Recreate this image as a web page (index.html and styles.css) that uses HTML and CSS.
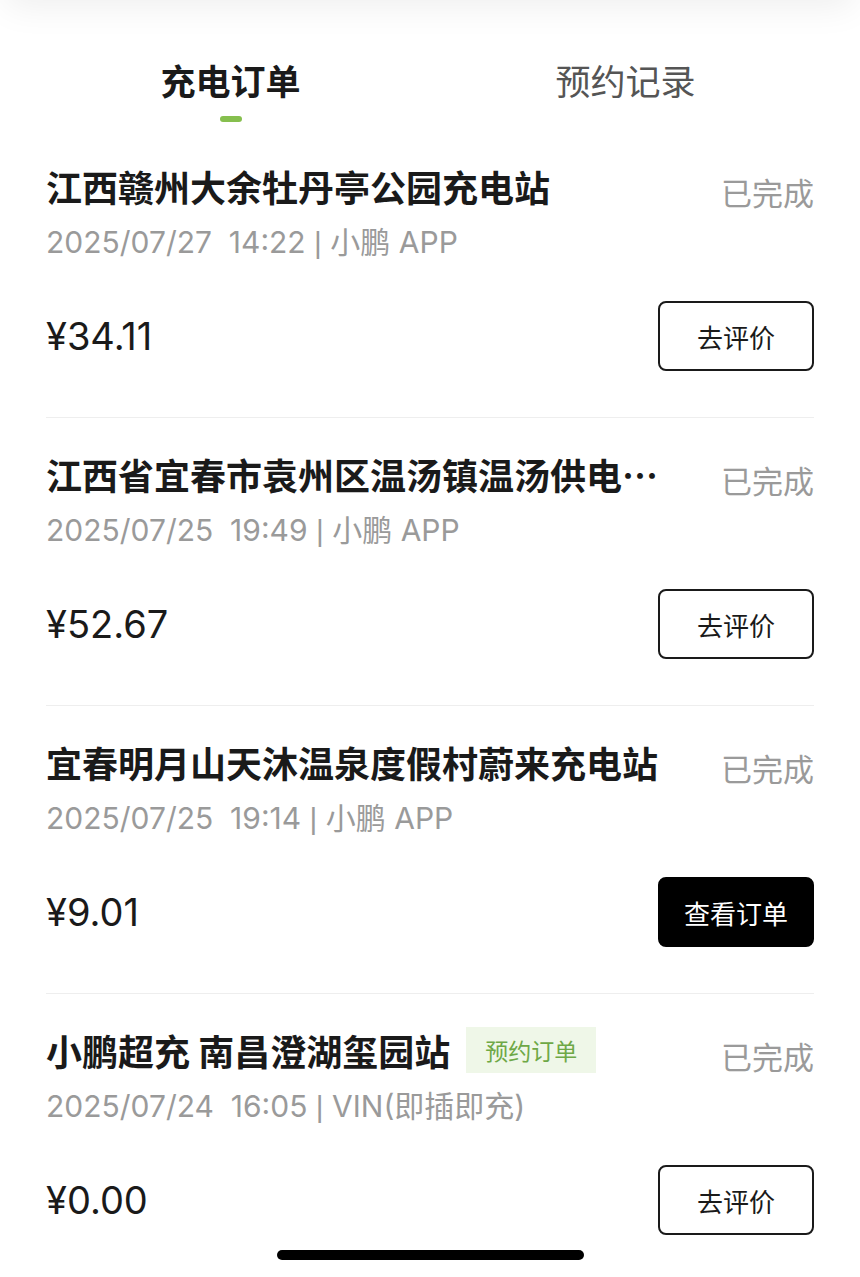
FILE: index.html
```html
<!DOCTYPE html>
<html lang="zh-CN">
<head>
<meta charset="utf-8">
<title>充电订单</title>
<link rel="stylesheet" href="styles.css">
</head>
<body>
<div class="page">
  <div class="header-shadow"></div>
  <nav class="tabs">
    <div class="tab tab-active">
      <span class="tab-label">充电订单</span>
      <span class="tab-bar"></span>
    </div>
    <div class="tab">
      <span class="tab-label">预约记录</span>
    </div>
  </nav>

  <ul class="orders">
    <li class="order">
      <div class="order-top">
        <div class="order-title-wrap">
          <h2 class="order-title">江西赣州大余牡丹亭公园充电站</h2>
        </div>
        <span class="order-status">已完成</span>
      </div>
      <p class="order-meta">2025/07/27&nbsp;&nbsp;14:22 <span class="sep">|</span> 小鹏 APP</p>
      <div class="order-bottom">
        <span class="order-price">¥34.11</span>
        <button class="btn btn-outline">去评价</button>
      </div>
    </li>
    <li class="order">
      <div class="order-top">
        <div class="order-title-wrap">
          <h2 class="order-title">江西省宜春市袁州区温汤镇温汤供电所充电站</h2>
        </div>
        <span class="order-status">已完成</span>
      </div>
      <p class="order-meta">2025/07/25&nbsp;&nbsp;19:49 <span class="sep">|</span> 小鹏 APP</p>
      <div class="order-bottom">
        <span class="order-price">¥52.67</span>
        <button class="btn btn-outline">去评价</button>
      </div>
    </li>
    <li class="order">
      <div class="order-top">
        <div class="order-title-wrap">
          <h2 class="order-title">宜春明月山天沐温泉度假村蔚来充电站</h2>
        </div>
        <span class="order-status">已完成</span>
      </div>
      <p class="order-meta">2025/07/25&nbsp;&nbsp;19:14 <span class="sep">|</span> 小鹏 APP</p>
      <div class="order-bottom">
        <span class="order-price">¥9.01</span>
        <button class="btn btn-solid">查看订单</button>
      </div>
    </li>
    <li class="order">
      <div class="order-top">
        <div class="order-title-wrap">
          <h2 class="order-title">小鹏超充 南昌澄湖玺园站</h2>
          <span class="order-tag">预约订单</span>
        </div>
        <span class="order-status">已完成</span>
      </div>
      <p class="order-meta">2025/07/24&nbsp;&nbsp;16:05 <span class="sep">|</span> VIN(即插即充)</p>
      <div class="order-bottom">
        <span class="order-price">¥0.00</span>
        <button class="btn btn-outline">去评价</button>
      </div>
    </li>
  </ul>
  <div class="home-indicator"></div>
</div>
</body>
</html>
```

FILE: styles.css
```css
* {
  box-sizing: border-box;
}

html, body {
  margin: 0;
  padding: 0;
  background: #ffffff;
}

body {
  font-family: "Inter", "Noto Sans CJK SC", sans-serif;
  color: #1a1a1a;
  overflow: hidden;
}

.page {
  width: 860px;
  height: 1277px;
  overflow: hidden;
  position: relative;
}

.header-shadow {
  height: 40px;
  margin: -40px 12px 0;
  background: #ffffff;
  box-shadow: 0 0 36px 6px rgba(0, 0, 0, 0.07);
}

.tabs {
  display: grid;
  grid-template-columns: 395px 395px;
  padding: 55px 0 8px 33px;
}

.tab {
  display: flex;
  flex-direction: column;
  align-items: center;
}

.tab-label {
  font-family: "Noto Sans CJK SC", sans-serif;
  font-size: 35px;
  line-height: 50px;
  color: #555555;
  font-weight: 400;
}

.tab-active .tab-label {
  color: #1a1a1a;
  font-weight: 700;
}

.tab-bar {
  width: 22px;
  height: 6px;
  border-radius: 3px;
  background: #86bf4e;
  margin-top: 11px;
}

.orders {
  list-style: none;
  margin: 0;
  padding: 0 46px;
}

.order {
  padding: 31px 0 46px;
  border-bottom: 1px solid #eeeeee;
}

.order:last-child {
  border-bottom: none;
}

.order-top {
  display: flex;
  justify-content: space-between;
  align-items: flex-start;
  height: 50px;
}

.order-title-wrap {
  display: flex;
  align-items: center;
  gap: 16px;
  min-width: 0;
}

.order-title {
  margin: 0;
  max-width: 616px;
  font-family: "Noto Sans CJK SC", sans-serif;
  font-size: 36px;
  line-height: 50px;
  font-weight: 700;
  color: #1a1a1a;
  white-space: nowrap;
  overflow: hidden;
  text-overflow: ellipsis;
}

.order-tag {
  flex: none;
  font-family: "Noto Sans CJK SC", sans-serif;
  font-size: 23px;
  line-height: 46px;
  padding: 0 19px;
  background: #eff7e8;
  color: #6ea846;
}

.order-status {
  flex: none;
  font-family: "Noto Sans CJK SC", sans-serif;
  font-size: 31px;
  line-height: 38px;
  padding-top: 12px;
  color: #9a9a9a;
}

.order-meta {
  margin: 11px 0 0;
  height: 40px;
  font-size: 30px;
  line-height: 40px;
  color: #9a9a9a;
  white-space: nowrap;
}

.sep {
  font-family: "Liberation Sans", sans-serif;
}

.order-bottom {
  margin-top: 39px;
  display: flex;
  justify-content: space-between;
  align-items: center;
  height: 70px;
}

.order-price {
  font-size: 38px;
  line-height: 70px;
  color: #1a1a1a;
}

.btn {
  width: 156px;
  height: 70px;
  border-radius: 8px;
  font-family: "Noto Sans CJK SC", sans-serif;
  font-size: 26px;
  padding: 0;
  cursor: pointer;
}

.btn-outline {
  background: #ffffff;
  border: 2px solid #1a1a1a;
  color: #1a1a1a;
}

.btn-solid {
  background: #000000;
  border: 2px solid #000000;
  color: #ffffff;
}

.home-indicator {
  position: absolute;
  left: 277px;
  bottom: 17px;
  width: 307px;
  height: 10px;
  border-radius: 5px;
  background: #000000;
}
```
